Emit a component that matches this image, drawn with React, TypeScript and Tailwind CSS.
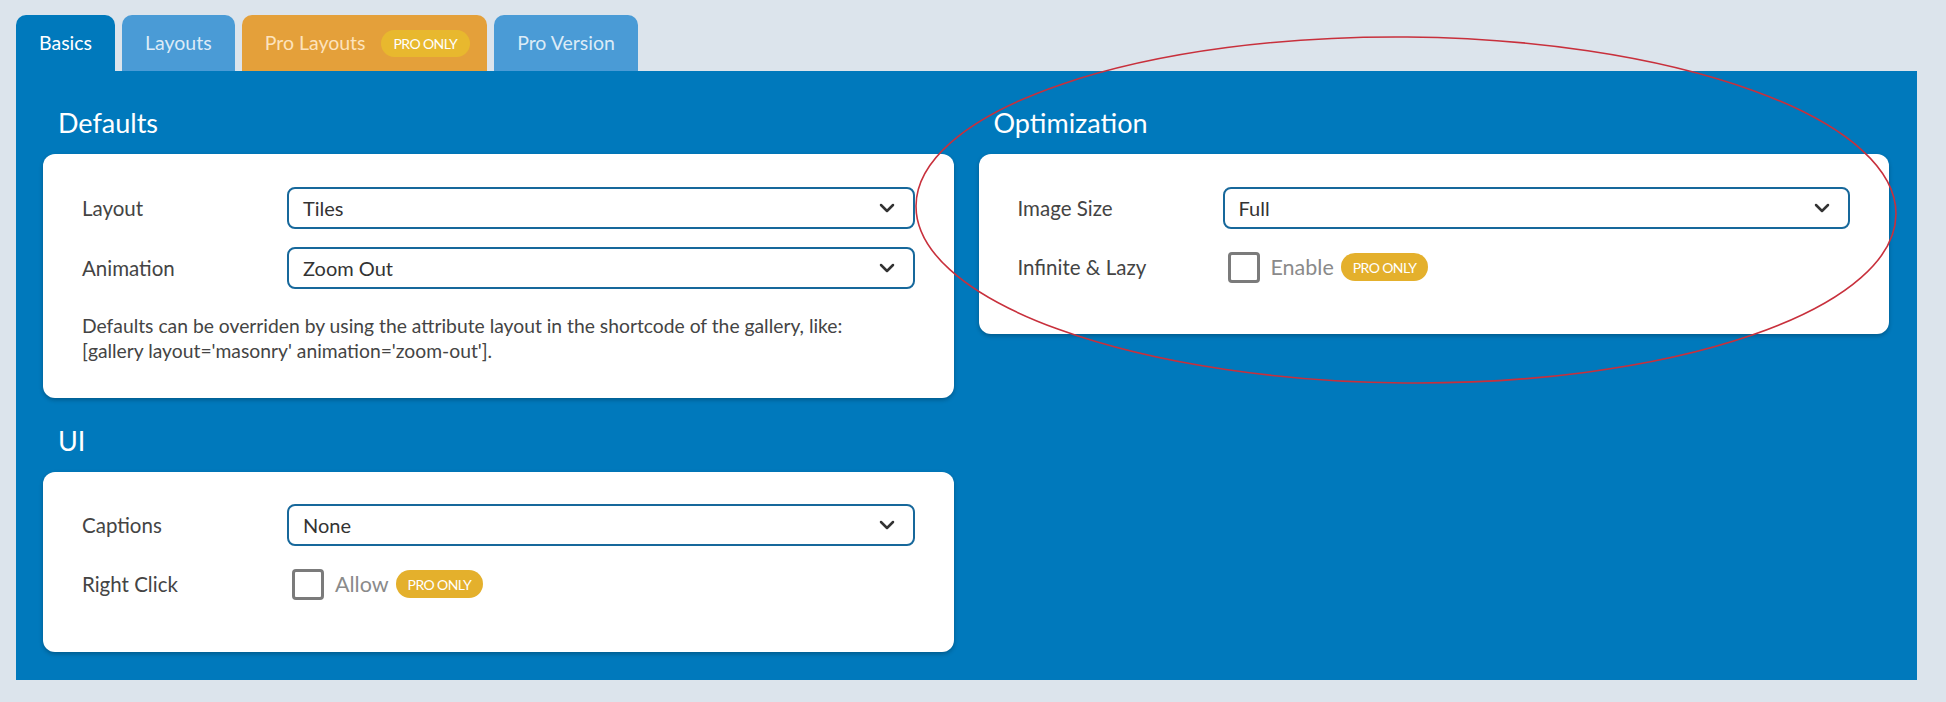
import { ChevronDown } from 'lucide-react'

const ProBadge = ({ className = '' }: { className?: string }) => (
  <span
    className={`inline-flex items-center justify-center h-[28px] px-[12px] rounded-full bg-[#e4b02c] text-white text-[14px] tracking-[-0.6px] ${className}`}
  >
    PRO ONLY
  </span>
)

const Select = ({ value }: { value: string }) => (
  <div className="flex items-center justify-between h-[42px] border-2 border-[#17689b] rounded-[8px] bg-white pl-[14px] pr-[14px] text-[20px] text-[#333]">
    <span>{value}</span>
    <ChevronDown size={24} strokeWidth={2.5} className="text-[#333]" />
  </div>
)

const Checkbox = ({ label }: { label: string }) => (
  <div className="flex items-center h-[32px] ml-[5px]">
    <div className="w-[32px] h-[31px] border-[3px] border-[#7b7b7b] rounded-[4px] bg-white"></div>
    <span className="ml-[11px] text-[21.5px] text-[#8a8a8a]">{label}</span>
    <ProBadge className="ml-[7px]" />
  </div>
)

const Row = ({ label, children, className = '' }: { label: string; children: React.ReactNode; className?: string }) => (
  <div className={`flex items-center ${className}`}>
    <div className="w-[205px] shrink-0 text-[20.5px] text-[#444]">{label}</div>
    <div className="flex-1">{children}</div>
  </div>
)

const Card = ({ children, className = '' }: { children: React.ReactNode; className?: string }) => (
  <div className={`bg-white rounded-[12px] shadow-[0_2px_4px_rgba(0,0,0,0.25)] px-[39px] ${className}`}>{children}</div>
)

const Heading = ({ children }: { children: React.ReactNode }) => (
  <h2 className="text-[27px] leading-[32px] text-white pl-[15px] mb-[15px]">{children}</h2>
)

export default function App() {
  const tabs = [
    { label: 'Basics', cls: 'bg-[#0079bc] text-white', pro: false },
    { label: 'Layouts', cls: 'bg-[#4a9bd6] text-[#dcebf7]', pro: false },
    { label: 'Pro Layouts', cls: 'bg-[#e4a03a] text-[#fde3bd]', pro: true },
    { label: 'Pro Version', cls: 'bg-[#4a9bd6] text-[#dcebf7]', pro: false },
  ]

  return (
    <div className="relative min-h-screen w-[1946px] bg-[#dce4ec] pt-[15px] pl-[16px] font-['Lato','Noto_Sans',sans-serif]">
      {/* Tabs */}
      <div className="flex gap-[7px] h-[56px]">
        {tabs.map((tab) => (
          <div
            key={tab.label}
            className={`flex items-center h-full rounded-t-[10px] pl-[23px] ${tab.pro ? 'pr-[17px]' : 'pr-[23px]'} text-[19.5px] ${tab.cls}`}
          >
            {tab.label}
            {tab.pro && (
              <span className="ml-[15px] inline-flex items-center h-[27px] px-[13px] rounded-full bg-[#e8b82e] text-white text-[14px] tracking-[-0.6px]">
                PRO ONLY
              </span>
            )}
          </div>
        ))}
      </div>

      {/* Panel */}
      <div className="w-[1901px] h-[609px] bg-[#0079bc] pt-[36px] pl-[27px] pr-[28px] grid grid-cols-2 gap-x-[25px] items-start">
        <div>
          <Heading>Defaults</Heading>
          <Card className="pt-[33px] pb-[35px]">
            <Row label="Layout">
              <Select value="Tiles" />
            </Row>
            <Row label="Animation" className="mt-[18px]">
              <Select value="Zoom Out" />
            </Row>
            <p className="mt-[24px] text-[19.3px] leading-[25px] text-[#444]">
              Defaults can be overriden by using the attribute layout in the shortcode of the gallery, like:
              <br />
              [gallery layout='masonry' animation='zoom-out'].
            </p>
          </Card>

          <div className="mt-[27px]">
            <Heading>UI</Heading>
            <Card className="pt-[32px] h-[180px]">
              <Row label="Captions">
                <Select value="None" />
              </Row>
              <Row label="Right Click" className="mt-[22px]">
                <Checkbox label="Allow" />
              </Row>
            </Card>
          </div>
        </div>

        <div>
          <Heading>Optimization</Heading>
          <Card className="pt-[33px] h-[180px]">
            <Row label="Image Size">
              <Select value="Full" />
            </Row>
            <Row label="Infinite & Lazy" className="mt-[22px]">
              <Checkbox label="Enable" />
            </Row>
          </Card>
        </div>
      </div>

      {/* Annotation ellipse */}
      <svg className="absolute left-0 top-0 pointer-events-none" width="1946" height="702">
        <ellipse
          cx="1406"
          cy="210"
          rx="490"
          ry="173"
          fill="none"
          stroke="#c8303c"
          strokeWidth="1.6"
          transform="rotate(0.5 1406 210)"
        />
      </svg>
    </div>
  )
}
